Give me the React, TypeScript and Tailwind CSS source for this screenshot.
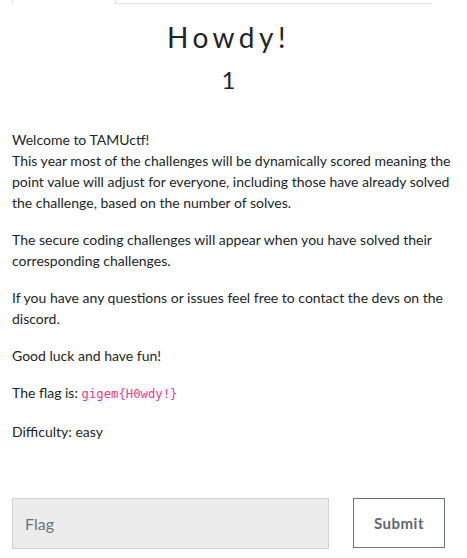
import { useState } from "react";

export default function App() {
  const [flag, setFlag] = useState("");

  return (
    <div className="w-[467px] h-[558px] overflow-hidden bg-white px-3 font-['Lato',sans-serif] text-[#212529]">
      {/* Tabs (scrolled, only the bottom of the tab shows) */}
      <div className="flex w-[420px] h-[4px] border-b border-[#dee2e6]">
        <div className="w-[104px] h-[4px] border-l border-r border-[#dee2e6] bg-white -mb-px" />
      </div>

      {/* Challenge header */}
      <div className="pr-[10px]">
        <h3 className="mt-[17px] text-center text-[28px] leading-[1.2] tracking-[4.5px] font-normal text-[#212529]">
          Howdy!
        </h3>
        <h4 className="mt-[11px] text-center text-[24px] leading-[1.2] font-normal text-[#212529]">
          1
        </h4>
      </div>

      {/* Description */}
      <div className="mt-[35px] text-[14px] leading-[21px]">
        <p className="mb-4">
          Welcome to TAMUctf!
          <br />
          This year most of the challenges will be dynamically scored meaning the point value will
          adjust for everyone, including those have already solved the challenge, based on the
          number of solves.
        </p>
        <p className="mb-4">
          The secure coding challenges will appear when you have solved their corresponding
          challenges.
        </p>
        <p className="mb-4">
          If you have any questions or issues feel free to contact the devs on the discord.
        </p>
        <p className="mb-4">Good luck and have fun!</p>
        <p className="mb-4">
          The flag is:{" "}
          <code className="font-['DejaVu_Sans_Mono',monospace] text-[12.25px] text-[#e83e8c]">
            gigem{"{"}H0wdy!{"}"}
          </code>
        </p>
        <p className="mb-4">Difficulty: easy</p>
      </div>

      {/* Flag form */}
      <form
        className="mt-[56px] flex items-start"
        onSubmit={(e) => e.preventDefault()}
      >
        <input
          value={flag}
          onChange={(e) => setFlag(e.target.value)}
          placeholder="Flag"
          className="w-[317px] h-[51px] px-3 bg-[#ececec] border border-[#cdd2d7] text-[16px] text-[#495057] placeholder:text-[#6c757d] outline-none"
        />
        <button
          type="submit"
          className="ml-[24px] w-[92px] h-[50px] border border-[#6c757d] bg-white text-[15px] font-bold tracking-[0.5px] text-[#5f6770]"
        >
          Submit
        </button>
      </form>
    </div>
  );
}
